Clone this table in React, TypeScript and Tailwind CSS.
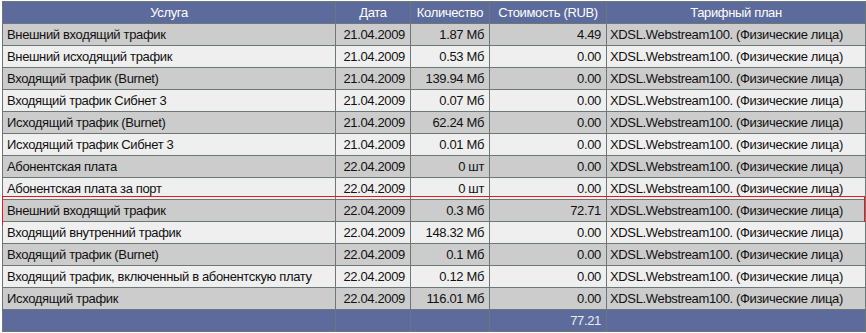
import React from "react";

const rows: [string, string, string, string][] = [
  ["Внешний входящий трафик", "21.04.2009", "1.87 Мб", "4.49"],
  ["Внешний исходящий трафик", "21.04.2009", "0.53 Мб", "0.00"],
  ["Входящий трафик (Burnet)", "21.04.2009", "139.94 Мб", "0.00"],
  ["Входящий трафик Сибнет 3", "21.04.2009", "0.07 Мб", "0.00"],
  ["Исходящий трафик (Burnet)", "21.04.2009", "62.24 Мб", "0.00"],
  ["Исходящий трафик Сибнет 3", "21.04.2009", "0.01 Мб", "0.00"],
  ["Абонентская плата", "22.04.2009", "0 шт", "0.00"],
  ["Абонентская плата за порт", "22.04.2009", "0 шт", "0.00"],
  ["Внешний входящий трафик", "22.04.2009", "0.3 Мб", "72.71"],
  ["Входящий внутренний трафик", "22.04.2009", "148.32 Мб", "0.00"],
  ["Входящий трафик (Burnet)", "22.04.2009", "0.1 Мб", "0.00"],
  ["Входящий трафик, включенный в абонентскую плату", "22.04.2009", "0.12 Мб", "0.00"],
  ["Исходящий трафик", "22.04.2009", "116.01 Мб", "0.00"],
];

const PLAN = "XDSL.Webstream100. (Физические лица)";

const cell = "h-[22px] flex items-center border-r border-b border-[#6b7878] whitespace-nowrap overflow-hidden";

export default function App() {
  return (
    <div className="w-[866px] h-[333px] bg-white overflow-hidden pt-px pl-[2px] text-[13px] tracking-[-0.35px] text-[#111]" style={{ fontFamily: '"Liberation Sans", Arial, sans-serif' }}>
      <div className="w-[864px] border-l border-t border-[#6b7878] flex flex-col">
        <div className="flex bg-[#5c6b9c] text-white">
          <div className={`${cell} w-[333px] justify-center`}>Услуга</div>
          <div className={`${cell} w-[75px] justify-center`}>Дата</div>
          <div className={`${cell} w-[79px] justify-center`}>Количество</div>
          <div className={`${cell} w-[117px] justify-center`}>Стоимость (RUB)</div>
          <div className={`${cell} w-[259px] justify-center`}>Тарифный план</div>
        </div>
        {rows.map((r, i) => (
          <div key={i} className={`relative flex ${i % 2 === 0 ? "bg-[#cccccc]" : "bg-[#efefef]"}`}>
            <div className={`${cell} w-[333px] pl-[4px]`}>{r[0]}</div>
            <div className={`${cell} w-[75px] justify-end pr-[5px]`}>{r[1]}</div>
            <div className={`${cell} w-[79px] justify-end pr-[5px]`}>{r[2]}</div>
            <div className={`${cell} w-[117px] justify-end pr-[5px]`}>{r[3]}</div>
            <div className={`${cell} w-[259px] pl-[3px]`}>{PLAN}</div>
            {i === 8 && (
              <div className="absolute -top-[4px] -bottom-[3px] -left-px right-px border border-[#e8191c] pointer-events-none" />
            )}
          </div>
        ))}
        <div className="flex bg-[#5c6b9c] text-[#e8ecf4]">
          <div className={`${cell} w-[333px]`}></div>
          <div className={`${cell} w-[75px]`}></div>
          <div className={`${cell} w-[79px]`}></div>
          <div className={`${cell} w-[117px] justify-end pr-[5px]`}>77.21</div>
          <div className={`${cell} w-[259px]`}></div>
        </div>
      </div>
    </div>
  );
}
